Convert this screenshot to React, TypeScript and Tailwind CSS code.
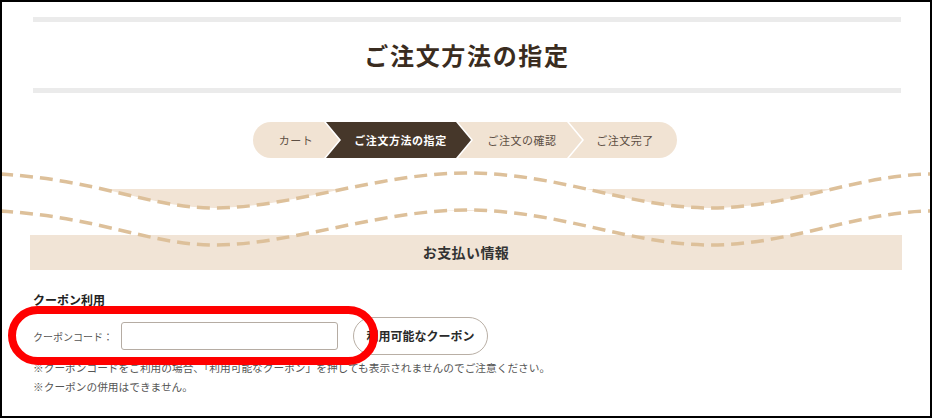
import React from "react";

const jp = "font-['Noto_Sans_CJK_JP','Noto_Sans',sans-serif]";

const steps = [
  { label: "カート", w: "w-[86px]", shape: "first" },
  { label: "ご注文方法の指定", w: "w-[145px]", shape: "mid", active: true },
  { label: "ご注文の確認", w: "w-[124px]", shape: "mid" },
  { label: "ご注文完了", w: "w-[108px]", shape: "last" },
];

function Stepper() {
  return (
    <div className="flex justify-center">
      <div className="flex h-[36px] -ml-[2px]">
        {steps.map((s, i) => (
          <div
            key={s.label}
            className={[
              "flex items-center justify-center text-[11px] tracking-[0.05em]",
              s.w,
              i > 0 ? "-ml-[13px]" : "",
              s.active ? "bg-[#46372a] text-white font-bold" : "bg-[#f1e3d3] text-[#5d4f43]",
              s.shape === "first"
                ? "rounded-l-full [clip-path:polygon(0_0,calc(100%_-_15px)_0,100%_50%,calc(100%_-_15px)_100%,0_100%)]"
                : s.shape === "mid"
                ? "[clip-path:polygon(0_0,calc(100%_-_15px)_0,100%_50%,calc(100%_-_15px)_100%,0_100%,15px_50%)]"
                : "rounded-r-full [clip-path:polygon(0_0,100%_0,100%_100%,0_100%,15px_50%)]",
            ].join(" ")}
          >
            <span className={s.shape === "first" ? "" : "pl-[4px]"}>{s.label}</span>
          </div>
        ))}
      </div>
    </div>
  );
}

// decorative stitched wave between the stepper and the form
function Wave() {
  const w1 =
    "M0,4 C100,10 150,38 215,38 C290,38 380,3 466,3 C560,3 630,38 710,38 C790,38 860,4 932,4";
  const w2 =
    "M0,41 C100,47 150,75 215,75 C290,75 380,40 466,40 C560,40 630,75 710,75 C790,75 860,41 932,41";
  const strip =
    w1 +
    " L932,41 C860,41 790,75 710,75 C630,75 560,40 466,40 C380,40 290,75 215,75 C150,75 100,47 0,41 Z";
  return (
    <svg
      width="932"
      height="65"
      viewBox="0 0 932 65"
      className="relative z-10 -mx-[2px] block overflow-visible"
    >
      <defs>
        <clipPath id="waveclip">
          <rect x="0" y="0" width="932" height="65" />
        </clipPath>
      </defs>
      <rect x="0" y="19" width="932" height="22" fill="#f2e4d5" />
      <path d={strip} fill="#ffffff" clipPath="url(#waveclip)" />
      <path d={w1} fill="none" stroke="#ddc09a" strokeWidth="3.5" strokeDasharray="13 7" />
      <path d={w2} fill="none" stroke="#ddc09a" strokeWidth="3.5" strokeDasharray="13 7" />
    </svg>
  );
}

export default function App() {
  return (
    <div className={`relative w-[932px] h-[418px] overflow-hidden border-2 border-black bg-white ${jp}`}>
      {/* Title */}
      <div className="pt-[15px] ml-[31px] w-[868px]">
        <div className="h-[5px] bg-[#ebebeb]" />
        <div className="h-[66px] flex items-center justify-center">
          <h1 className="text-[24px] font-bold tracking-[0.07em] text-[#3a2c20]">ご注文方法の指定</h1>
        </div>
        <div className="h-[5px] bg-[#ebebeb]" />
      </div>

      <div className="mt-[29px]">
        <Stepper />
      </div>

      <div className="mt-[12px]">
        <Wave />
      </div>

      {/* Payment info */}
      <div className="ml-[28px] w-[872px] h-[35px] bg-[#f1e4d6] flex items-center justify-center">
        <h2 className="text-[14px] font-bold tracking-[0.03em] text-[#333]">お支払い情報</h2>
      </div>

      <div className="ml-[31px] mt-[23px]">
        <h3 className="text-[12px] font-bold text-[#222] leading-[14px]">クーポン利用</h3>
        <div className="mt-[10px] flex items-center h-[38px]">
          <span className="text-[10px] text-[#555] w-[88px]">クーポンコード：</span>
          <input
            type="text"
            className="w-[217px] h-[28px] border border-[#b5aca3] rounded-[3px] bg-white"
          />
          <button className="ml-[15px] h-[38px] w-[135px] rounded-full border border-[#b9afa5] bg-white text-[12px] font-bold text-[#2a2a2a]">
            利用可能なクーポン
          </button>
        </div>
        <p className="mt-[3px] text-[10.7px] leading-[19px] text-[#555]">
          ※クーポンコードをご利用の場合、「利用可能なクーポン」を押しても表示されませんのでご注意ください。
        </p>
        <p className="text-[10.7px] leading-[19px] text-[#555]">※クーポンの併用はできません。</p>
      </div>

      {/* red annotation */}
      <div className="absolute left-[6px] top-[304px] w-[370px] h-[59px] border-[8px] border-[#ff0000] rounded-[30px] pointer-events-none" />
    </div>
  );
}
